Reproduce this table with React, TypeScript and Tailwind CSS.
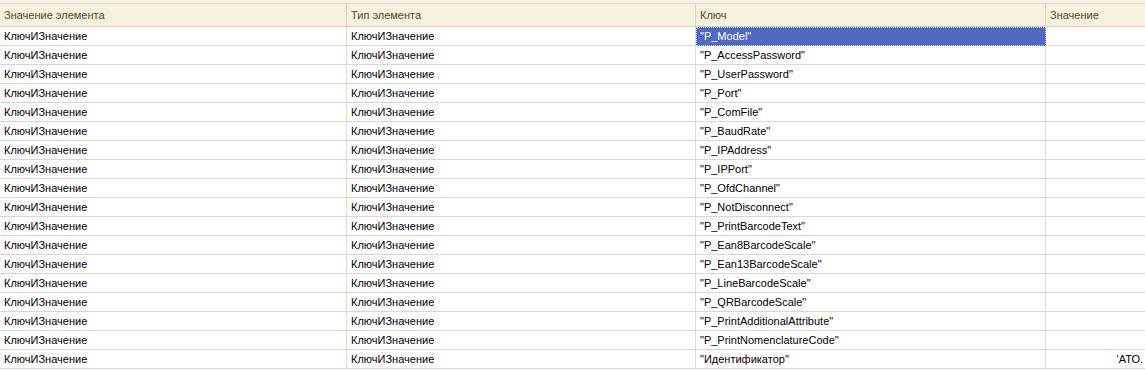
import React from "react";

const keys = [
  '"P_Model"',
  '"P_AccessPassword"',
  '"P_UserPassword"',
  '"P_Port"',
  '"P_ComFile"',
  '"P_BaudRate"',
  '"P_IPAddress"',
  '"P_IPPort"',
  '"P_OfdChannel"',
  '"P_NotDisconnect"',
  '"P_PrintBarcodeText"',
  '"P_Ean8BarcodeScale"',
  '"P_Ean13BarcodeScale"',
  '"P_LineBarcodeScale"',
  '"P_QRBarcodeScale"',
  '"P_PrintAdditionalAttribute"',
  '"P_PrintNomenclatureCode"',
  '"Идентификатор"',
];

export default function App() {
  return (
    <div
      className="w-[1145px] h-[371px] overflow-hidden bg-white text-[11px] text-black"
      style={{ fontFamily: '"Liberation Sans", Arial, sans-serif' }}
    >
      <div className="bg-[#f8f5e6] pt-[3px]">
        <div className="grid grid-cols-[347px_349px_350px_1fr] h-[24px] bg-[#f5f1de] border-t border-t-[#e2ddc4] border-b border-b-[#d6d2b8] text-[#4b4a30]">
          <div className="pl-[4px] flex items-center border-r border-[#d9d5bc]">Значение элемента</div>
          <div className="pl-[4px] flex items-center border-r border-[#d9d5bc]">Тип элемента</div>
          <div className="pl-[4px] flex items-center border-r border-[#d9d5bc]">Ключ</div>
          <div className="pl-[4px] flex items-center">Значение</div>
        </div>
      </div>
      {keys.map((k, i) => (
        <div
          key={i}
          className="grid grid-cols-[347px_349px_350px_1fr] h-[19px] border-b border-[#d6d6d6]"
        >
          <div className="pl-[4px] flex items-center border-r border-[#dcdcdc]">КлючИЗначение</div>
          <div className="pl-[4px] flex items-center border-r border-[#dcdcdc]">КлючИЗначение</div>
          {i === 0 ? (
            <div className="pl-[3px] flex items-center bg-[#4f68c2] text-white border border-dotted border-[#c9d2f0]">
              {k}
            </div>
          ) : (
            <div className="pl-[4px] flex items-center border-r border-[#dcdcdc]">{k}</div>
          )}
          <div className="flex items-center justify-end pr-[2px] overflow-hidden whitespace-nowrap">
            {i === keys.length - 1 ? "'АТО." : ""}
          </div>
        </div>
      ))}
    </div>
  );
}
